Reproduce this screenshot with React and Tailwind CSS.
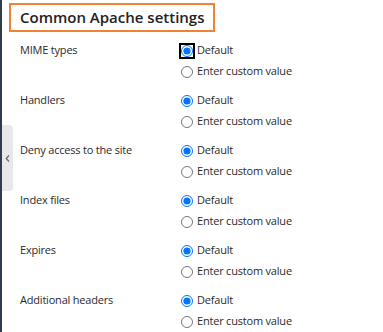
const rows = [
  'MIME types',
  'Handlers',
  'Deny access to the site',
  'Index files',
  'Expires',
  'Additional headers',
];

const Option = ({ name, checked, focused, label }) => (
  <label className="flex items-center h-[21px] gap-[4px]">
    <input
      type="radio"
      name={name}
      defaultChecked={checked}
      className={`m-0 w-[12px] h-[12px] accent-[#0075ff] ${focused ? 'outline-2 outline-black outline-offset-[0px] rounded-[3px]' : ''}`}
    />
    <span>{label}</span>
  </label>
);

export default function App() {
  return (
    <div className="relative w-[383px] h-[332px] bg-white border-l-2 border-[#2e3d4d] overflow-hidden text-[11px] tracking-[-0.2px] text-[#2b2b2b]" style={{ fontFamily: '"Open Sans", "Noto Sans", sans-serif' }}>
      <div className="absolute left-0 top-[125px] w-[11px] h-[66px] bg-[#e8e8e8] rounded-r-[4px] flex items-center justify-center">
        <svg width="5" height="7" viewBox="0 0 5 7" fill="none" stroke="#666" strokeWidth="1.2">
          <path d="M4 0.5 1.2 3.5 4 6.5" />
        </svg>
      </div>
      <div className="pl-[7px] pt-[3px]">
        <div className="inline-flex items-center h-[29px] px-[9px] border-2 border-[#f08232]">
          <h2 className="text-[15px] tracking-normal font-semibold text-[#222] leading-none">Common Apache settings</h2>
        </div>
      </div>
      <div className="pl-[18px] pt-[8px] flex flex-col gap-[8px]">
        {rows.map((r, i) => (
          <div key={r} className="flex">
            <div className="w-[161px] h-[21px] flex items-center">{r}</div>
            <div className="flex flex-col">
              <Option name={`r${i}`} checked focused={i === 0} label="Default" />
              <Option name={`r${i}`} label="Enter custom value" />
            </div>
          </div>
        ))}
      </div>
    </div>
  );
}
